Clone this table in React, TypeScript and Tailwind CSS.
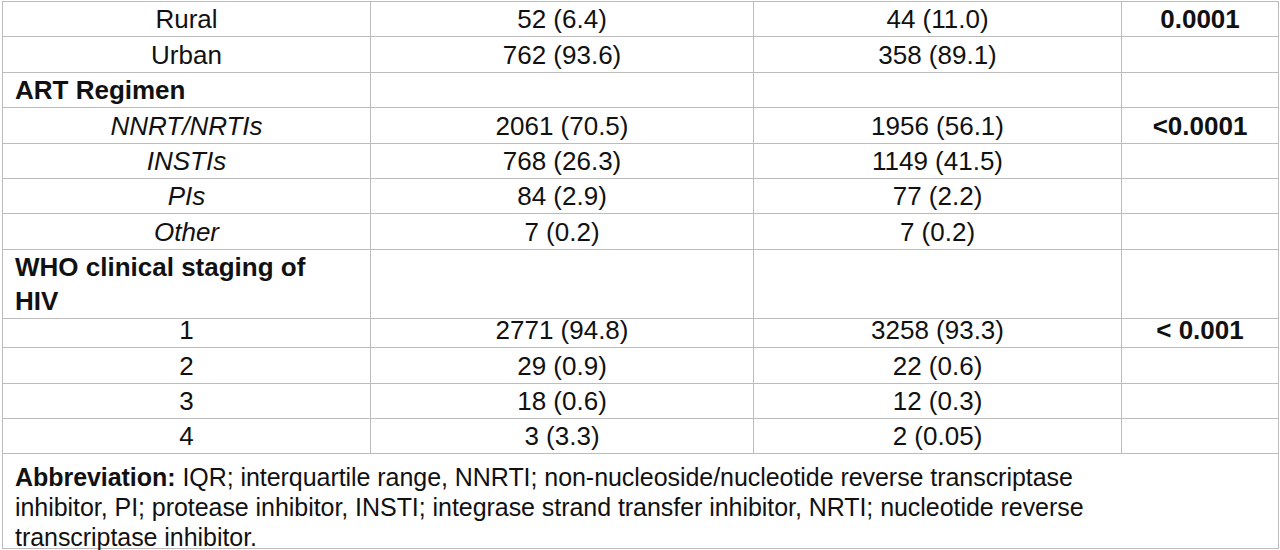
type Row = {
  label: string;
  kind: "sub" | "italic" | "head";
  a?: string;
  b?: string;
  p?: string;
  h: string;
};

const rows: Row[] = [
  { label: "Rural", kind: "sub", a: "52 (6.4)", b: "44 (11.0)", p: "0.0001", h: "h-[35px]" },
  { label: "Urban", kind: "sub", a: "762 (93.6)", b: "358 (89.1)", h: "h-[36px]" },
  { label: "ART Regimen", kind: "head", h: "h-[35px]" },
  { label: "NNRT/NRTIs", kind: "italic", a: "2061 (70.5)", b: "1956 (56.1)", p: "<0.0001", h: "h-[36px]" },
  { label: "INSTIs", kind: "italic", a: "768 (26.3)", b: "1149 (41.5)", h: "h-[35px]" },
  { label: "PIs", kind: "italic", a: "84 (2.9)", b: "77 (2.2)", h: "h-[35px]" },
  { label: "Other", kind: "italic", a: "7 (0.2)", b: "7 (0.2)", h: "h-[36px]" },
  { label: "WHO clinical staging of HIV", kind: "head", h: "h-[63px]" },
  { label: "1", kind: "sub", a: "2771 (94.8)", b: "3258 (93.3)", p: "< 0.001", h: "h-[35px]" },
  { label: "2", kind: "sub", a: "29 (0.9)", b: "22 (0.6)", h: "h-[36px]" },
  { label: "3", kind: "sub", a: "18 (0.6)", b: "12 (0.3)", h: "h-[35px]" },
  { label: "4", kind: "sub", a: "3 (3.3)", b: "2 (0.05)", h: "h-[35px]" },
];

const cell = "border-r border-b border-[#bcbcbc] flex items-center";

export default function App() {
  return (
    <div className="min-h-[550px] bg-white pt-[1px] pl-[2px] text-[#111] [font-family:'Liberation_Sans',Arial,sans-serif]">
      <div className="w-[1277px] border-l border-t border-[#bcbcbc] text-[26px] leading-[34px]">
        {rows.map((row) => (
          <div key={row.label} className={`grid grid-cols-[368px_383px_368px_157px] ${row.h}`}>
            {row.kind === "head" ? (
              <div className={`${cell} pl-[12px] pr-[40px] font-bold`}>{row.label}</div>
            ) : (
              <div className={`${cell} justify-center ${row.kind === "italic" ? "italic" : ""}`}>{row.label}</div>
            )}
            <div className={`${cell} justify-center`}>{row.a}</div>
            <div className={`${cell} justify-center`}>{row.b}</div>
            <div className={`${cell} justify-center font-bold`}>{row.p}</div>
          </div>
        ))}
        <div className="h-[95px] border-r border-b border-[#bcbcbc] pl-[12px] pt-[8px] text-[25px] leading-[30px] tracking-[-0.05px]">
          <span className="font-bold">Abbreviation:</span> IQR; interquartile range, NNRTI; non-nucleoside/nucleotide reverse
          transcriptase
          <br />
          inhibitor, PI; protease inhibitor, INSTI; integrase strand transfer inhibitor, NRTI; nucleotide reverse
          <br />
          transcriptase inhibitor.
        </div>
      </div>
    </div>
  );
}
